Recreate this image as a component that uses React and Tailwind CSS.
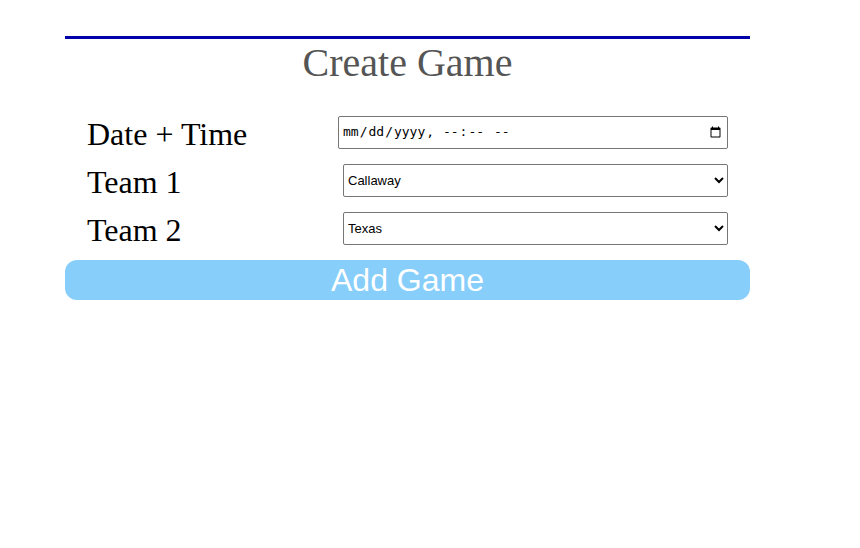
export default function App() {
  return (
    <div className="min-h-[548px] w-[860px] bg-white">
      <div className="ml-[65px] w-[685px] pt-[36px]">
        <div className="border-t-[3px] border-[#0000aa]" />
        <h1 className="mt-[1px] text-center font-['Liberation_Serif',serif] text-[40px] leading-[46px] text-[#555555]">
          Create Game
        </h1>

        <div className="mt-[22px] flex flex-col px-[22px]">
          <div className="flex h-[48px] items-center justify-between">
            <label className="mt-[4px] font-['Liberation_Serif',serif] text-[32px] leading-none text-black">
              Date + Time
            </label>
            <input
              type="datetime-local"
              className="h-[33px] w-[390px] rounded-[2px] border border-[#767676] bg-white px-[3px] font-['DejaVu_Sans_Mono',monospace] text-[13px] text-black"
            />
          </div>
          <div className="flex h-[48px] items-center justify-between">
            <label className="mt-[4px] font-['Liberation_Serif',serif] text-[32px] leading-none text-black">
              Team 1
            </label>
            <select
              defaultValue="Callaway"
              className="h-[33px] w-[385px] rounded-[2px] border border-[#767676] bg-white px-0 font-['Liberation_Sans',Arial,sans-serif] text-[13px] text-black"
            >
              <option>Callaway</option>
              <option>Texas</option>
            </select>
          </div>
          <div className="flex h-[48px] items-center justify-between">
            <label className="mt-[4px] font-['Liberation_Serif',serif] text-[32px] leading-none text-black">
              Team 2
            </label>
            <select
              defaultValue="Texas"
              className="h-[33px] w-[385px] rounded-[2px] border border-[#767676] bg-white px-0 font-['Liberation_Sans',Arial,sans-serif] text-[13px] text-black"
            >
              <option>Callaway</option>
              <option>Texas</option>
            </select>
          </div>
        </div>

        <button className="mt-[8px] flex h-[40px] w-full items-center justify-center rounded-[12px] bg-[#87cefa] font-['Liberation_Sans',Arial,sans-serif] text-[32px] leading-none text-white">
          Add Game
        </button>
      </div>
    </div>
  );
}
